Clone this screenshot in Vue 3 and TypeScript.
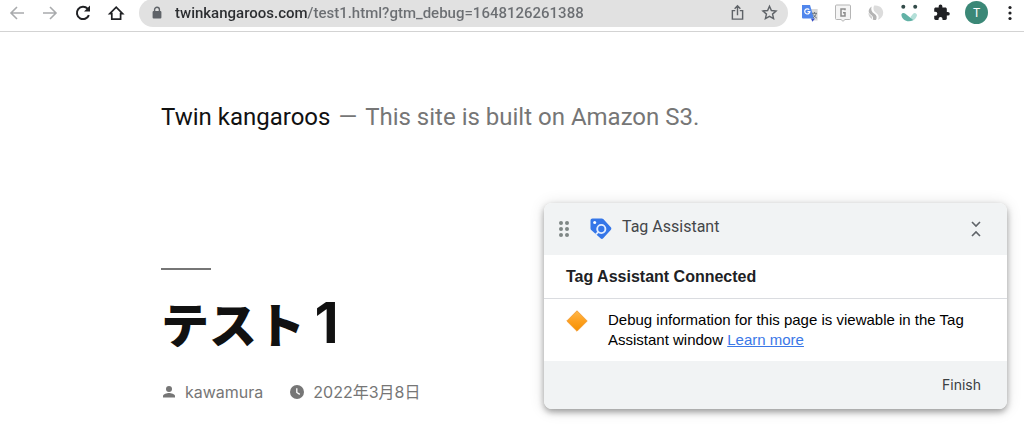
<script setup lang="ts">
import { ref } from 'vue'

const address = ref('twinkangaroos.com/test1.html?gtm_debug=1648126261388')
const author = 'kawamura'
const published = '2022年3月8日'
const gripDots = [0, 1, 2, 3, 4, 5]
</script>

<template>
  <div class="page">
    <header class="toolbar">
      <nav class="nav" aria-label="Navigation">
        <button type="button" class="icon muted" aria-label="Back">
          <svg viewBox="0 0 20 20"><path d="M17 10H4M10 4l-6 6 6 6" /></svg>
        </button>
        <button type="button" class="icon muted" aria-label="Forward">
          <svg viewBox="0 0 20 20"><path d="M3 10h13M10 4l6 6-6 6" /></svg>
        </button>
        <button type="button" class="icon strong" aria-label="Reload">
          <svg viewBox="0 0 20 20">
            <path d="M15.9 12.1A6.2 6.2 0 1 1 14.6 5.6L16 7" />
            <path class="solid" d="M17 2.6v6h-6z" />
          </svg>
        </button>
        <button type="button" class="icon strong" aria-label="Home">
          <svg viewBox="0 0 20 20"><path d="M3.800 10.600h2v5.600h8.800v-5.600h2L10.200 4.200z" stroke-width="1.700" /></svg>
        </button>
      </nav>
      <div class="omnibox">
        <svg class="lock" viewBox="0 0 10 14">
          <path d="M2.6 6V3.6a2.4 2.4 0 0 1 4.8 0V6" fill="none" stroke="#5f6368" stroke-width="1.4" />
          <rect x="0.6" y="5" width="8.8" height="7.6" rx="1" fill="#5f6368" />
        </svg>
        <input v-model="address" class="address" type="text" aria-label="Address" spellcheck="false" />
        <button type="button" class="icon tool" aria-label="Share">
          <svg viewBox="0 0 20 20"><path d="M7.6 8H4.600v9h10.800V8h-3M10 13V3.400M7 6l3-3 3 3" /></svg>
        </button>
        <button type="button" class="icon tool" aria-label="Bookmark">
          <svg viewBox="0 0 20 20"><path d="M10 3.4l2 4.5 4.9.5-3.7 3.3 1.1 4.8-4.3-2.5-4.3 2.5 1.1-4.8-3.7-3.3 4.9-.5z" /></svg>
        </button>
      </div>
      <div class="extensions">
        <button type="button" class="ext" aria-label="Translate">
          <svg viewBox="0 0 20 20">
            <path d="M8 6h9.600v11.500H12z" fill="#d8d8d8" />
            <path d="M11 15.500h4l-2.600 3.200z" fill="#3a4fc4" />
            <path d="M2 2h8l4 13.500H3a1 1 0 0 1-1-1z" fill="#5086ec" />
            <path d="M9.300 6.700a2.600 2.600 0 1 0 .6 2H7.500" fill="none" stroke="#fff" stroke-width="1.200" />
            <path d="M12 10.300h5M14.500 9v1.300M16.300 10.300c-.5 2-1.800 3.500-3.300 4.500M13.300 11.500c.7 1.500 1.900 2.700 3.500 3.600" fill="none" stroke="#6b7580" stroke-width="1" />
          </svg>
        </button>
        <button type="button" class="ext" aria-label="Ghostery">
          <svg viewBox="0 0 20 20">
            <path d="M3.500 2h13a1 1 0 0 1 1 1v12.500a1 1 0 0 1-1 1H12l-2 1.800-2-1.800H3.500a1 1 0 0 1-1-1V3a1 1 0 0 1 1-1z" fill="#f5f5f5" stroke="#b5b5b5" />
            <path d="M12 7.300V6H8v7h4V9.700h-2" fill="none" stroke="#8d8d8d" stroke-width="1.500" />
          </svg>
        </button>
        <button type="button" class="ext" aria-label="Similar sites">
          <svg viewBox="0 0 20 20">
            <path d="M8.200 2.500c5.500-.8 9.300 3.200 9 7.500-.3 3.500-2.300 5.900-5.300 6.800 1.500-3 .8-5-1.700-6.800C7.700 8.200 6.700 5.500 8.200 2.500z" fill="#dcdcdc" />
            <path d="M5.600 3.400c-1 3.200.2 5.500 2.800 7.400 2.400 1.700 2.800 3.600 1.600 6.200-1.300.1-2.300-.1-3.300-.5.8-1.900.2-3.300-1.500-4.500C1.500 9.500 2.200 5.900 5.600 3.400z" fill="#b5b5b5" />
            <path d="M2.400 9.800c.8 1.300 1.500 1.900 2.500 2.700 1.200 1 1.500 2 1 3.500C3.700 14.800 2.400 12.500 2.400 9.800z" fill="#d0d0d0" />
          </svg>
        </button>
        <button type="button" class="ext" aria-label="Smile">
          <svg viewBox="0 0 20 20">
            <circle cx="4.300" cy="3.800" r="2" fill="#334b49" />
            <circle cx="16.200" cy="3.800" r="2" fill="#334b49" />
            <path d="M11.500 14l2.600-3.200a2.200 2.200 0 0 1 3.900 1.600c-.7 2.600-2.700 4.800-5.500 5.500z" fill="#b3dfd8" />
            <path d="M2.400 11.800c.3-1.900 2.600-2.400 4-1l7.800 6.300c-5 3-11.400.2-11.800-5.300z" fill="#62b2a6" />
          </svg>
        </button>
        <button type="button" class="ext" aria-label="Extensions">
          <svg viewBox="-1 -1 27 27">
            <path d="M20.500 11H19V7c0-1.100-.9-2-2-2h-4V3.500a2.500 2.500 0 0 0-5 0V5H4c-1.100 0-2 .9-2 2v3.800h1.500a2.700 2.700 0 0 1 0 5.400H2V20c0 1.100.9 2 2 2h3.800v-1.500a2.700 2.700 0 0 1 5.400 0V22H17c1.100 0 2-.9 2-2v-4h1.500a2.500 2.500 0 0 0 0-5z" fill="#202124" />
          </svg>
        </button>
        <button type="button" class="avatar" aria-label="Profile">T</button>
        <button type="button" class="ext menu" aria-label="Menu">
          <svg viewBox="0 0 18 20">
            <circle cx="9" cy="4.500" r="1.600" /><circle cx="9" cy="10" r="1.600" /><circle cx="9" cy="15.500" r="1.600" />
          </svg>
        </button>
      </div>
    </header>

    <main class="content">
      <p class="branding">
        <a class="site" href="#">Twin kangaroos</a>
        <span>—</span>
        <span>This site is built on Amazon S3.</span>
      </p>
      <article>
        <h1 class="title">テスト <span class="number">1</span></h1>
        <div class="meta">
          <a class="meta-item" href="#">
            <svg viewBox="0 0 16 16"><circle cx="8" cy="5" r="3" /><path d="M2 13.500v-1.500c0-2 4-3 6-3s6 1 6 3v1.500z" /></svg>
            {{ author }}
          </a>
          <a class="meta-item" href="#">
            <svg viewBox="0 0 16 16"><circle cx="8" cy="8" r="7" /><path d="M7.800 4.200v4.300l3 1.900" fill="none" stroke="#fff" stroke-width="1.300" /></svg>
            <time datetime="2022-03-08">{{ published }}</time>
          </a>
        </div>
      </article>
    </main>

    <section class="card" aria-label="Tag Assistant">
      <header class="card-head">
        <span class="grip"><i v-for="dot in gripDots" :key="dot" /></span>
        <svg class="tag" viewBox="0 0 22 22">
          <path d="M2.500.5h9.300c.6 0 1.100.2 1.500.6l7.300 7.800c1 1 1 2 .1 3l-7.500 8.300c-.8.9-1.800.9-2.700.1L1.200 12c-.5-.5-.7-1-.7-1.700V2.500c0-1.200.8-2 2-2z" fill="#3576e8" />
          <circle cx="4.700" cy="4.600" r="1.500" fill="#fff" />
          <circle cx="11.300" cy="11" r="4.100" fill="none" stroke="#e3edff" stroke-width="1.900" />
          <path d="M8.400 13.900l-2.500 2.500" stroke="#e3edff" stroke-width="1.900" />
        </svg>
        <span class="card-name">Tag Assistant</span>
        <button type="button" class="collapse" aria-label="Collapse">
          <svg viewBox="0 0 12 18"><path d="M2 2l4 4 4-4M2 16l4-4 4 4" /></svg>
        </button>
      </header>
      <h2 class="card-title">Tag Assistant Connected</h2>
      <div class="card-body">
        <svg class="diamond" viewBox="0 0 22 22">
          <defs>
            <linearGradient id="amber" x1="0" y1="0" x2="0" y2="1">
              <stop offset="0" stop-color="#ffb84a" />
              <stop offset="0.5" stop-color="#fda01f" />
              <stop offset="1" stop-color="#f59100" />
            </linearGradient>
          </defs>
          <path d="M11 .8L21.200 11 11 21.200.8 11z" fill="url(#amber)" stroke="#f3a03c" stroke-linejoin="round" />
        </svg>
        <p>Debug information for this page is viewable in the Tag Assistant window <a href="#">Learn more</a></p>
      </div>
      <footer class="card-foot">
        <button type="button" class="finish">Finish</button>
      </footer>
    </section>
  </div>
</template>

<style>
body {
  background: #fff;
}
</style>

<style scoped>
.page {
  position: relative;
  height: 100vh;
  overflow: hidden;
  font-family: Inter, "Noto Sans CJK JP", sans-serif;
  color: #111;
}
button {
  padding: 0;
  border: 0;
  background: none;
  font: inherit;
  color: inherit;
}
svg {
  display: block;
}
.toolbar {
  display: flex;
  align-items: center;
  box-sizing: border-box;
  height: 32px;
  padding: 0 5px 6px 7px;
  border-bottom: 1px solid #d3d3d3;
}
.nav {
  display: flex;
  gap: 13px;
}
.icon svg {
  width: 20px;
  height: 20px;
  fill: none;
  stroke: currentColor;
  stroke-width: 1.6;
}
.muted {
  color: #a9abad;
}
.strong {
  color: #202124;
}
.strong svg {
  stroke-width: 2;
}
.icon .solid {
  fill: currentColor;
  stroke: none;
}
.omnibox {
  display: flex;
  flex: 1;
  align-items: center;
  gap: 13px;
  height: 28px;
  margin-left: 13px;
  padding: 0 9px 0 13px;
  border-radius: 14px;
  background: #e1e1e1;
  color: #5f6368;
}
.lock {
  width: 10px;
  height: 14px;
}
.address {
  flex: 1;
  min-width: 0;
  padding: 0;
  border: 0;
  outline: 0;
  font: 500 15px Roboto, sans-serif;
  color: transparent;
  background: linear-gradient(90deg, #2b2d30 133px, #6b6e72 133px);
  background-clip: text;
}
.tool svg {
  width: 19px;
  height: 19px;
  stroke-width: 1.5;
}
.extensions {
  display: flex;
  align-items: center;
  gap: 13px;
  margin-left: 12px;
}
.ext svg {
  width: 20px;
  height: 20px;
}
.avatar {
  width: 23px;
  height: 23px;
  border-radius: 50%;
  background: #3b8877;
  color: #fff;
  font-size: 12px;
}
.ext.menu svg {
  width: 18px;
  fill: #202124;
}
.content {
  padding: 70px 161px 0;
}
.branding {
  display: flex;
  gap: 8px;
  margin: 0;
  font-family: Roboto, sans-serif;
  font-size: 24px;
  line-height: 30px;
  color: #767676;
}
.site {
  color: #111;
  text-decoration: none;
}
.title {
  margin: 136px 0 0;
  font-size: 48px;
  font-weight: 900;
  line-height: 60px;
}
.title::before {
  content: "";
  display: block;
  width: 50px;
  height: 2px;
  margin-bottom: 23px;
  background: #767676;
}
.number {
  font-size: 56px;
  font-weight: 700;
}
.meta {
  display: flex;
  gap: 26px;
  margin-top: 24px;
  font-size: 16px;
  line-height: 24px;
}
.meta-item {
  display: flex;
  align-items: center;
  gap: 8px;
  color: #767676;
  text-decoration: none;
}
.meta-item svg {
  width: 16px;
  height: 16px;
  fill: currentColor;
}
.card {
  position: absolute;
  right: 17px;
  bottom: 21px;
  width: 463px;
  border-radius: 8px;
  overflow: hidden;
  background: #fff;
  box-shadow: 0 3px 6px rgba(0, 0, 0, 0.35), 0 1px 16px rgba(0, 0, 0, 0.12);
}
.card-head {
  display: flex;
  align-items: center;
  height: 52px;
  padding: 0 25px 0 15px;
  background: #f1f3f4;
}
.grip {
  display: grid;
  grid-template-columns: 4px 4px;
  gap: 2px;
}
.grip i {
  width: 4px;
  height: 4px;
  border-radius: 50%;
  background: #7f8785;
}
.tag {
  width: 22px;
  height: 22px;
  margin-left: 21px;
}
.card-name {
  flex: 1;
  margin-left: 10px;
  padding-bottom: 4px;
  font-family: Roboto, sans-serif;
  font-size: 16px;
  line-height: 20px;
  color: #444649;
}
.collapse svg {
  width: 12px;
  height: 18px;
  fill: none;
  stroke: #5f6368;
  stroke-width: 1.6;
}
.card-title {
  margin: 0;
  padding: 0 22px;
  border-bottom: 1px solid #dadce0;
  font: bold 16px/43px "Liberation Sans", Arial, sans-serif;
  color: #202124;
}
.card-body {
  display: flex;
  gap: 20px;
  padding: 11px 40px 11px 22px;
  font: 15px/20px "Liberation Sans", Arial, sans-serif;
  color: #000;
}
.diamond {
  flex: none;
  width: 22px;
  height: 22px;
}
.card-body p {
  margin: 0;
}
.card-body a {
  color: #3b78e7;
}
.card-foot {
  display: flex;
  justify-content: flex-end;
  padding: 12px 26px;
  background: #f1f3f4;
}
.finish {
  font-size: 14px;
  line-height: 24px;
  color: #3c4043;
}
</style>
